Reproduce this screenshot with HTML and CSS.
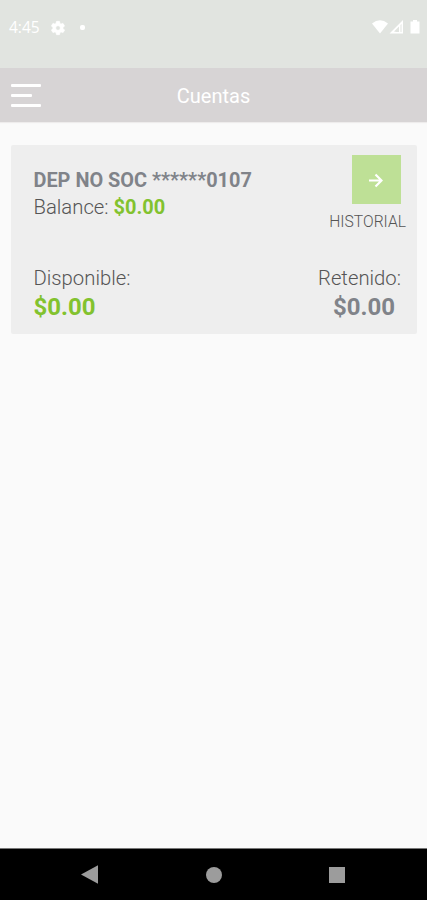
FILE: index.html
```html
<!DOCTYPE html>
<html lang="es">

<head>
    <meta charset="UTF-8">
    <meta name="viewport" content="width=device-width, initial-scale=1.0">
    <title>Cuentas</title>

    <link rel="stylesheet" href="styles.css">
</head>

<body>
    <div class="status-bar">
        <div class="status-left">
            <span class="time">4:45</span>
            <svg class="gear" width="16" height="16" viewBox="0 0 24 24">
                <path fill="#fff" stroke="#fff" fill-rule="evenodd" d="M19.4 13c.1-.3.1-.7.1-1s0-.7-.1-1l2.1-1.6c.2-.2.3-.4.1-.7l-2-3.4c-.1-.2-.4-.3-.6-.2l-2.5 1c-.5-.4-1.1-.7-1.7-1L14.5 2.4c0-.2-.3-.4-.5-.4h-4c-.2 0-.5.2-.5.4l-.4 2.7c-.6.3-1.2.6-1.7 1l-2.5-1c-.2-.1-.5 0-.6.2l-2 3.4c-.1.3 0 .5.1.7L4.5 11c0 .3-.1.7-.1 1s0 .7.1 1l-2.1 1.6c-.2.2-.2.4-.1.7l2 3.4c.1.2.4.3.6.2l2.5-1c.5.4 1.1.7 1.7 1l.4 2.7c0 .2.3.4.5.4h4c.2 0 .5-.2.5-.4l.4-2.7c.6-.3 1.2-.6 1.7-1l2.5 1c.2.1.5 0 .6-.2l2-3.4c.1-.3 0-.5-.1-.7zM12 15.5a3.5 3.5 0 1 1 0-7 3.5 3.5 0 0 1 0 7z" />
            </svg>
            <span class="dot"></span>
        </div>
        <svg class="status-icons" width="50" height="16" viewBox="0 0 50 16">
            <path fill="#fff" d="M0 4.5Q8 -2 16 4.5L8 14.5z" />
            <path fill="#fff" fill-rule="evenodd" d="M17.5 14.5L31 1v13.5zM24.5 13H27V7.5L22 12.5zM28.5 13h1V5l-1 1z" />
            <path fill="#fff" d="M38.5 2.5H41V1h4v1.5h2.5v12h-9z" />
        </svg>
    </div>

    <header>
        <button class="menu" aria-label="Menu">
            <span></span>
            <span></span>
            <span></span>
        </button>
        <h1>Cuentas</h1>
    </header>

    <main>
        <section class="card">
            <div class="row">
                <div class="account">
                    <h2>DEP NO SOC ******0107</h2>
                    <p>Balance: <b class="green">$0.00</b></p>
                </div>
                <div class="history">
                    <button class="arrow" aria-label="Historial">
                        <svg width="14" height="15" viewBox="0 0 14 15">
                            <path fill="none" stroke="#fff" stroke-width="2.2" d="M0 7.5h12M6.500 1.500l6 6-6 6" />
                        </svg>
                    </button>
                    <span>HISTORIAL</span>
                </div>
            </div>
            <div class="row amounts">
                <div>
                    <p>Disponible:</p>
                    <b class="amount green">$0.00</b>
                </div>
                <div class="held">
                    <p>Retenido:</p>
                    <b class="amount">$0.00</b>
                </div>
            </div>
        </section>
    </main>

    <footer>
        <svg width="18" height="20" viewBox="0 0 18 20">
            <path fill="#9c9c9c" d="M0 9.500L17 .3v18.400z" />
        </svg>
        <span class="home"></span>
        <span class="recent"></span>
    </footer>
</body>

</html>
```

FILE: styles.css
```css
* {
    padding: 0;
    margin: 0;
    box-sizing: border-box;
}

body {
    display: flex;
    flex-direction: column;
    height: 100vh;
    background-color: #fafafa;
    color: #555;
    font-family: Roboto, "Liberation Sans", sans-serif;
}

button {
    border: none;
    background: none;
}

.status-bar {
    display: flex;
    justify-content: space-between;
    height: 68px;
    padding: 19px 7px 0 9px;
    background-color: #e1e4e0;
}

.status-left {
    display: flex;
    height: 17px;
    align-items: center;
}

.time {
    width: 41px;
    color: #fff;
    font-family: "Open Sans", sans-serif;
    font-size: 15.5px;
    line-height: 17px;
}

.dot {
    width: 5px;
    height: 5px;
    margin-left: 14px;
    border-radius: 2px;
    background-color: #fff;
}

.status-icons {
    margin-right: -2px;
}

header {
    display: grid;
    grid-template-columns: 1fr auto 1fr;
    align-items: center;
    height: 54px;
    padding: 0 11px;
    background-color: #d7d4d5;
    box-shadow: 0 1px 1px #eeecec;
}

.menu {
    display: flex;
    flex-direction: column;
    gap: 7px;
    width: 30px;
}

.menu span {
    width: 30px;
    height: 3px;
    border-radius: 1px;
    background-color: #fff;
}

.menu span:nth-child(2) {
    width: 21px;
}

h1 {
    padding-top: 1px;
    color: #fff;
    font-size: 20px;
    font-weight: 400;
}

main {
    flex: 1;
    padding: 23px 10px 0 11px;
}

.card {
    height: 189px;
    padding: 10px 11px 0 22.5px;
    border-radius: 2px;
    background-color: #eee;
}

.row {
    display: flex;
    justify-content: space-between;
}

.account {
    padding-top: 12px;
    white-space: nowrap;
}

h2,
.card p {
    line-height: 27px;
}

h2 {
    color: #808389;
    font-size: 19.9px;
    font-weight: 700;
}

.card p {
    font-size: 20.3px;
    font-weight: 300;
}

p b {
    font-size: 20px;
    font-weight: 700;
}

.green {
    color: #82c22e;
}

.history {
    display: flex;
    flex-direction: column;
    align-items: flex-end;
    font-size: 15.7px;
    font-weight: 300;
    line-height: 18px;
}

.arrow {
    display: flex;
    align-items: center;
    justify-content: center;
    width: 49px;
    height: 49px;
    margin: 0 5px 9px 0;
    padding: 1px 2px 0 0;
    background-color: #bee096;
}

.amounts {
    padding: 34px 5px 0 0;
}

.amount {
    display: block;
    font-size: 24px;
    line-height: 31px;
}

.held .amount {
    padding-right: 6px;
    color: #808389;
    text-align: right;
}

footer {
    display: flex;
    align-items: center;
    justify-content: space-between;
    height: 52px;
    padding: 0 82px 0 81px;
    border-top: 1px solid #777;
    background-color: #000;
}

.home,
.recent {
    width: 16px;
    height: 16px;
    background-color: #9c9c9c;
}

.home {
    border-radius: 50%;
}
```
